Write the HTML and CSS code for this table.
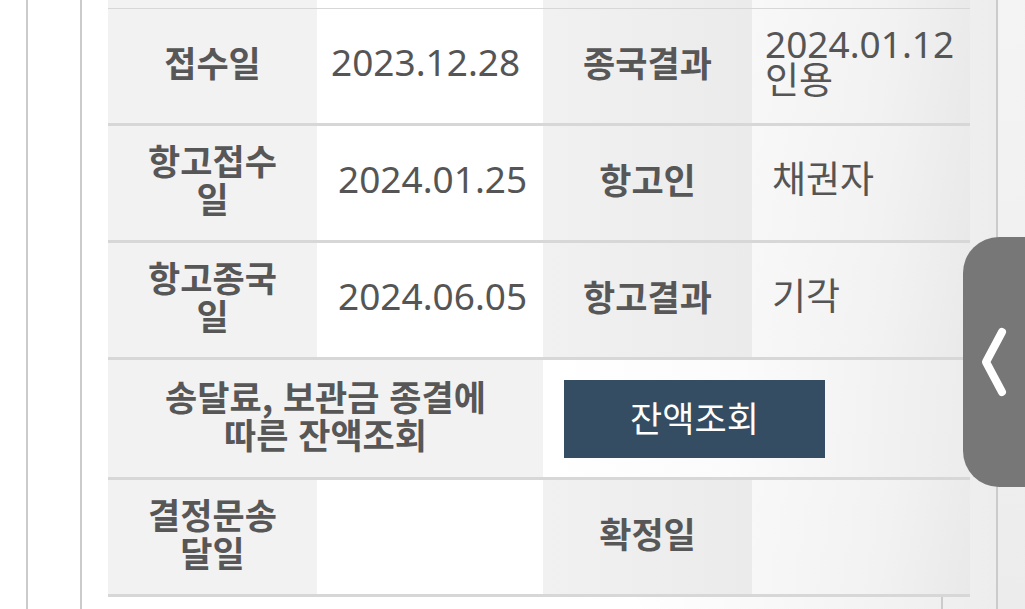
FILE: index.html
```html
<!DOCTYPE html>
<html lang="ko">
<head>
<meta charset="utf-8">
<link rel="stylesheet" href="styles.css">
</head>
<body>
<div class="page">
  <div class="frame">
    <div class="panel">
      <div class="table">
        <div class="row row-prev">
          <div class="c th"></div><div class="c td"></div><div class="c th th2"></div><div class="c td td4"></div>
        </div>
        <div class="row">
          <div class="c th">접수일</div>
          <div class="c td val">2023.12.28</div>
          <div class="c th th2">종국결과</div>
          <div class="c td td4 val">2024.01.12 인용</div>
        </div>
        <div class="row">
          <div class="c th">항고접수<br>일</div>
          <div class="c td val sp">2024.01.25</div>
          <div class="c th th2">항고인</div>
          <div class="c td td4 val sp">채권자</div>
        </div>
        <div class="row">
          <div class="c th">항고종국<br>일</div>
          <div class="c td val sp">2024.06.05</div>
          <div class="c th th2">항고결과</div>
          <div class="c td td4 val sp">기각</div>
        </div>
        <div class="row row-wide">
          <div class="c th span2">송달료, 보관금 종결에<br>따른 잔액조회</div>
          <div class="c td span2 btncell"><button class="btn" type="button">잔액조회</button></div>
        </div>
        <div class="row">
          <div class="c th">결정문송<br>달일</div>
          <div class="c td"></div>
          <div class="c th th2">확정일</div>
          <div class="c td td4"></div>
        </div>
      </div>
      <div class="after"><div class="after-box"></div></div>
    </div>
    <div class="edge"></div>
  </div>
  <div class="tab">
    <svg width="30" height="76" viewBox="0 0 30 76" aria-hidden="true">
      <polyline points="21,8 5,38 21,68" fill="none" stroke="#ffffff" stroke-width="8" stroke-linecap="round" stroke-linejoin="round"/>
    </svg>
  </div>
</div>
</body>
</html>
```

FILE: styles.css
```css
html, body {
  margin: 0;
  padding: 0;
  background: #ffffff;
}

body {
  font-family: "Noto Sans CJK KR", "Noto Sans", sans-serif;
  width: 1025px;
  height: 609px;
  overflow: hidden;
}

.page {
  position: relative;
  height: 609px;
  overflow: hidden;
  padding-left: 26px;
  display: flex;
}

.frame {
  display: flex;
  border-left: 2px solid #cbcbcb;
  padding-left: 52px;
  flex: 1;
}

.panel {
  flex: none;
  border-left: 2px solid #cbcbcb;
  border-right: 2px solid #cbcbcb;
  padding: 0 26px;
  box-sizing: border-box;
  width: 918px;
  background: linear-gradient(90deg, #ffffff 0%, #ffffff 60%, #ededed 100%);
}

.edge {
  flex: 1;
  background: linear-gradient(180deg, #f4f4f4, #ececec);
}

.table {
  display: flex;
  flex-direction: column;
}

.row {
  display: grid;
  grid-template-columns: 209px 226px 209px 218px;
  height: 117px;
  border-bottom: 3px solid #d7d7d7;
  box-sizing: border-box;
}

.row-prev {
  height: 9px;
}

.row-wide {
  height: 120px;
}

.c {
  display: flex;
  align-items: center;
  padding-bottom: 8px;
  box-sizing: border-box;
  overflow: hidden;
}

.th {
  background: #f2f2f2;
  justify-content: center;
  text-align: center;
  font-family: "Noto Sans CJK KR", sans-serif;
  font-weight: 700;
  font-size: 35px;
  line-height: 38px;
  color: #575757;
}

.th2 {
  background: linear-gradient(90deg, #f1f1f1, #ebebeb);
}

.td {
  background: #ffffff;
}

.td4 {
  background: linear-gradient(100deg, #f8f8f8 0%, #f2f2f2 60%, #e9e9e9 100%);
}

.val {
  font-family: "Noto Sans", "Noto Sans CJK KR", sans-serif;
  font-size: 37px;
  line-height: 36px;
  color: #555555;
  padding-left: 14px;
  padding-right: 6px;
}

.td4.val {
  padding-left: 13px;
}

.val.sp {
  padding-left: 21px;
}

.td4.val.sp {
  padding-left: 20px;
}

.span2 {
  grid-column: span 2;
}

.btncell {
  padding-left: 21px;
  padding-bottom: 0;
  background: linear-gradient(95deg, #ffffff 0%, #fbfbfb 45%, #ececec 100%);
}

.btn {
  width: 261px;
  height: 78px;
  border: 0;
  border-radius: 0;
  background: #344d63;
  color: #ffffff;
  font-family: "Noto Sans CJK KR", sans-serif;
  font-size: 35px;
  padding: 0 0 4px;
}

.after {
  height: 20px;
  display: flex;
  justify-content: flex-end;
  padding-right: 27px;
}

.after-box {
  width: 2px;
  background: #cbcbcb;
}

.tab {
  position: absolute;
  left: 963px;
  top: 237px;
  width: 80px;
  height: 250px;
  background: #777777;
  border-radius: 36px 0 0 36px;
  display: flex;
  align-items: center;
  padding-left: 18px;
  box-sizing: border-box;
}
```
